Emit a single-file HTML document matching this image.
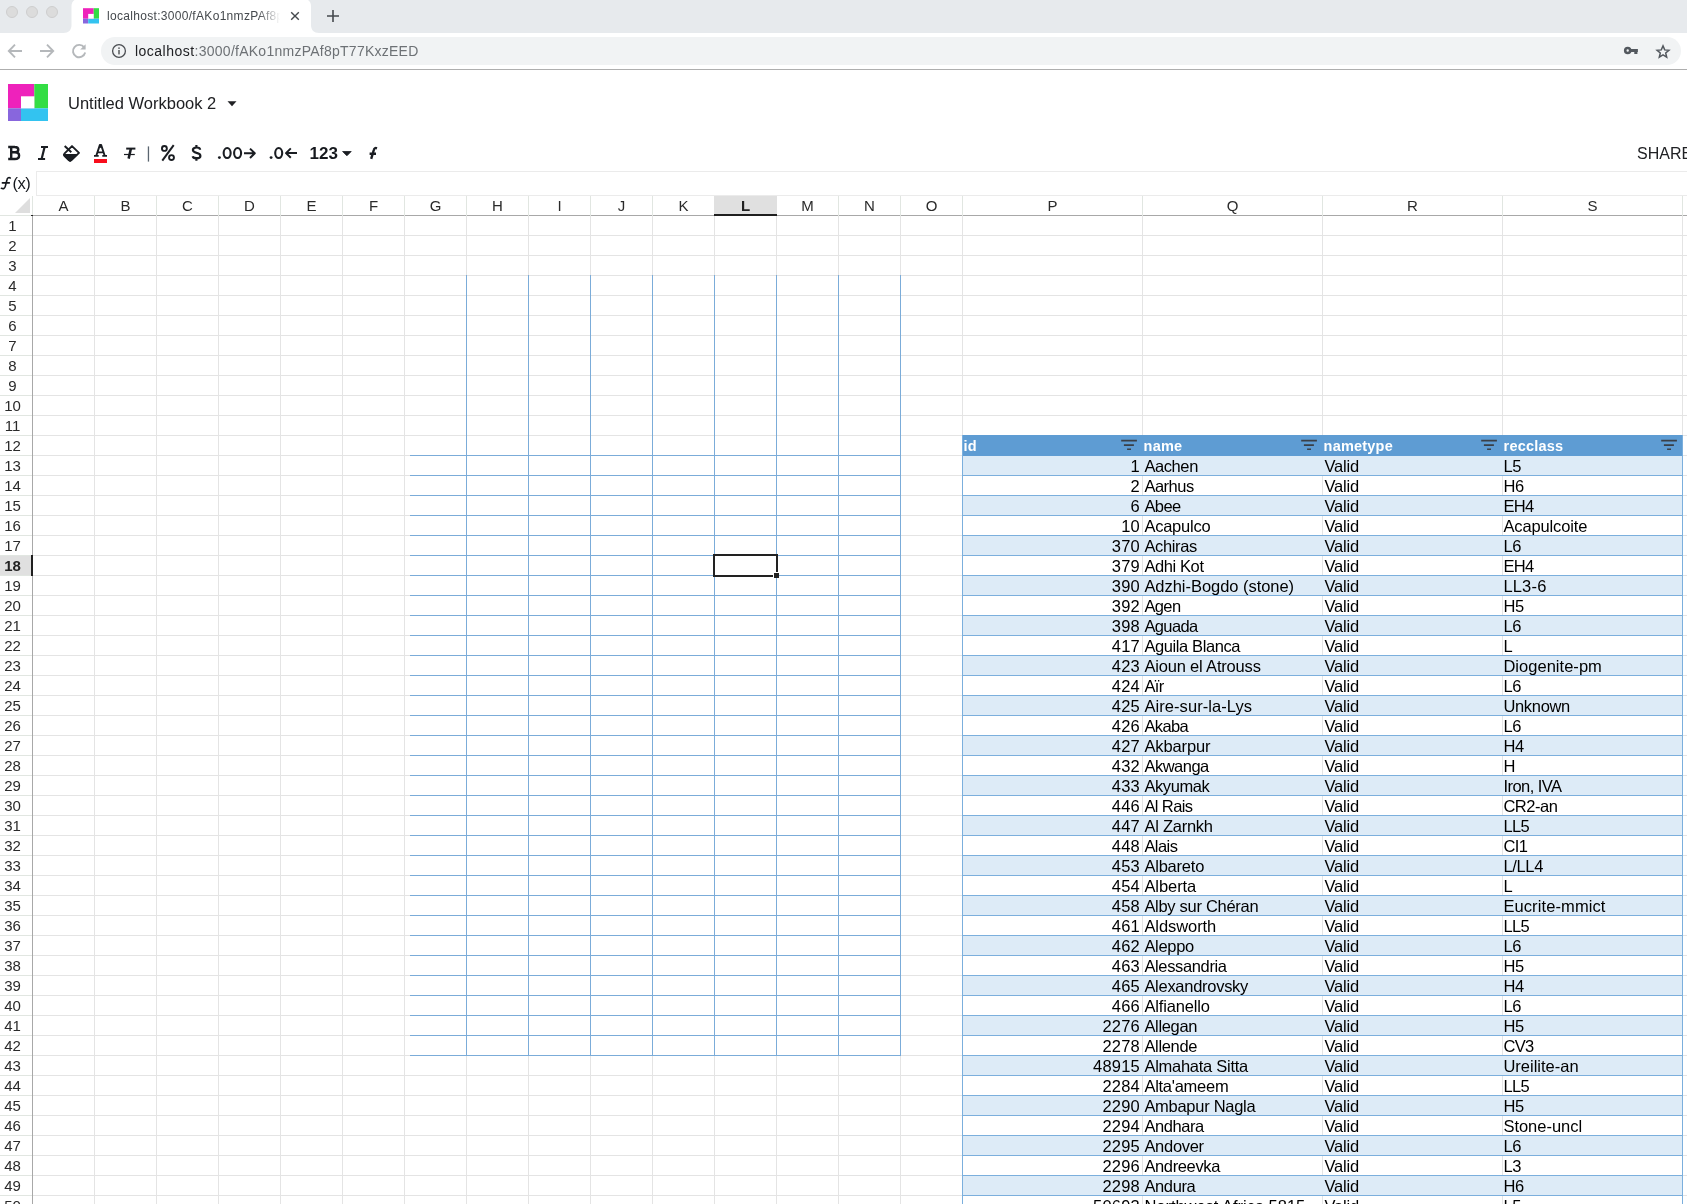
<!DOCTYPE html>
<html><head><meta charset="utf-8"><title>Untitled Workbook 2</title>
<style>
*{margin:0;padding:0;box-sizing:border-box}
html,body{width:1687px;height:1204px;overflow:hidden;background:#fff}
body{position:relative;font-family:"Liberation Sans",sans-serif;color:#000}
.abs{position:absolute}
#tabbar{left:0;top:0;width:1687px;height:33px;background:#e7eaed}
.tl{position:absolute;top:6px;width:12px;height:12px;border-radius:50%;background:#dcdcdc;border:1px solid #cecece}
#urlbar{left:101px;top:37px;width:1580px;height:28px;border-radius:14px;background:#f1f3f4}
#sep{left:0;top:69px;width:1687px;height:1px;background:#aeaeae}
.ch{position:absolute;top:196px;height:19px;line-height:20px;font-size:15px;color:#2a2a2a;text-align:center}
.rh{position:absolute;left:0;width:25px;height:20px;line-height:21px;font-size:15px;color:#2a2a2a;text-align:center}
.c{position:absolute;height:20px;line-height:21px;font-size:16.5px;white-space:nowrap;color:#000}
.r{text-align:right}
.band{position:absolute;left:963px;width:719px;height:19px;background:#ddebf7}
.bl{position:absolute;left:962px;width:721px;height:1px;background:#7bafdd}

.tbt{top:144px;font-weight:bold;font-size:17px;line-height:20px;color:#15181d;white-space:nowrap}
.hd{position:absolute;top:436px;margin-left:-0.4px;letter-spacing:0.2px;height:20px;line-height:21px;font-size:14.5px;font-weight:bold;color:#fff;white-space:nowrap}
#wrap{position:absolute;left:0;top:0;width:1687px;height:1204px;overflow:hidden;will-change:transform}
</style></head><body><div id="wrap">

<div class="abs" id="tabbar">
<div class="tl" style="left:6px"></div>
<div class="tl" style="left:26px"></div>
<div class="tl" style="left:46px"></div>
<svg class="abs" style="left:60px;top:0" width="264" height="33" viewBox="0 0 264 33"><path d="M3.5 33 C8.5 33 11.5 30 11.5 25 L11.5 6 C11.5 2.5 13.5 0 17 -1.5 L245.5 -1.5 C249 0 251 2.5 251 6 L251 25 C251 30 254 33 259 33 Z" fill="#fff"/></svg>
<svg class="abs" style="left:83px;top:8px" width="16" height="16" viewBox="0 0 16 16"><rect x="0" y="0.2" width="10.7" height="10.5" fill="#ee22bb"/><rect x="10.7" y="0.2" width="5.3" height="10.5" fill="#33dd44"/><rect x="0" y="10.7" width="5.2" height="4.8" fill="#8866dd"/><rect x="5.2" y="10.7" width="10.8" height="4.8" fill="#33c3f0"/><rect x="5.2" y="5.9" width="5.5" height="4.8" fill="#fff"/></svg>
<div class="abs" style="left:107px;top:8px;width:176px;height:17px;line-height:17px;font-size:12px;color:#45494d;white-space:nowrap;overflow:hidden;letter-spacing:0.31px">localhost:3000/fAKo1nmzPAf8pT</div>
<div class="abs" style="left:258px;top:6px;width:26px;height:20px;background:linear-gradient(90deg,rgba(255,255,255,0),#fff 85%)"></div>
<svg class="abs" style="left:290px;top:11px" width="10" height="10" viewBox="0 0 10 10"><path d="M1.2 1.2 L8.8 8.8 M8.8 1.2 L1.2 8.8" stroke="#45494d" stroke-width="1.4" fill="none"/></svg>
<svg class="abs" style="left:326px;top:9px" width="14" height="14" viewBox="0 0 14 14"><path d="M7 1 V13 M1 7 H13" stroke="#45494d" stroke-width="1.6" fill="none"/></svg>
</div>
<svg class="abs" style="left:7px;top:43px" width="16" height="16" viewBox="0 0 16 16"><path d="M15 8 H2.5 M8 1.7 L1.8 8 L8 14.3" stroke="#b5b8bb" stroke-width="1.9" fill="none"/></svg>
<svg class="abs" style="left:39px;top:43px" width="16" height="16" viewBox="0 0 16 16"><path d="M1 8 H13.5 M8 1.7 L14.2 8 L8 14.3" stroke="#b5b8bb" stroke-width="1.9" fill="none"/></svg>
<svg class="abs" style="left:71px;top:43px" width="16" height="16" viewBox="0 0 16 16"><path d="M13.2 4.4 A6.2 6.2 0 1 0 14.2 9.6" stroke="#b5b8bb" stroke-width="1.9" fill="none"/><path d="M14.6 1.2 V6.6 H9.2 Z" fill="#b5b8bb"/></svg>
<div class="abs" id="urlbar"></div>
<svg class="abs" style="left:111px;top:43px" width="16" height="16" viewBox="0 0 16 16"><circle cx="8" cy="8" r="6.4" stroke="#4a4d51" stroke-width="1.3" fill="none"/><rect x="7.3" y="7" width="1.4" height="4.4" fill="#4a4d51"/><rect x="7.3" y="4.4" width="1.4" height="1.5" fill="#4a4d51"/></svg>
<div class="abs" style="left:135px;top:42px;height:18px;line-height:18px;font-size:14px;color:#6d7175;white-space:nowrap;letter-spacing:0.255px"><span style="color:#202124;letter-spacing:0.48px">localhost</span>:3000/fAKo1nmzPAf8pT77KxzEED</div>
<svg class="abs" style="left:1620px;top:42px" width="20" height="18" viewBox="1620 42 20 18"><circle cx="1627.7" cy="50.5" r="2.5" stroke="#53585e" stroke-width="2.6" fill="none"/><path d="M1630.6 49 H1637.9 V52 H1637.4 V54.1 H1634.3 V52 H1630.6 Z" fill="#53585e"/></svg>
<svg class="abs" style="left:1654px;top:42px" width="18" height="18" viewBox="1654 42 18 18"><path d="M1663.00 45.85 L1664.71 49.90 L1668.94 50.26 L1665.70 53.05 L1666.69 57.10 L1663.00 54.94 L1659.31 57.10 L1660.30 53.05 L1657.06 50.26 L1661.29 49.90 Z" stroke="#53585e" stroke-width="1.5" fill="none" stroke-linejoin="miter"/></svg>
<div class="abs" id="sep"></div>
<svg class="abs" style="left:8px;top:84px" width="40" height="37" viewBox="0 0 40 37"><rect x="0" y="0" width="26.3" height="24.3" fill="#ee22bb"/><rect x="26.3" y="0" width="13.7" height="24.3" fill="#33dd44"/><rect x="0" y="24.3" width="13" height="12.7" fill="#8866dd"/><rect x="13" y="24.3" width="27" height="12.7" fill="#33c3f0"/><rect x="13" y="12.3" width="13.3" height="12" fill="#fff"/></svg>
<div class="abs" id="title" style="left:68px;top:93px;height:20px;line-height:20px;font-size:16.5px;color:#202124;white-space:nowrap;letter-spacing:0px">Untitled Workbook 2</div>
<svg class="abs" style="left:227px;top:101px" width="10" height="6" viewBox="0 0 10 6"><path d="M0.5 0.3 H9.5 L5 5.3 Z" fill="#202124"/></svg>
<svg class="abs" style="left:0;top:138px" width="400" height="30" viewBox="0 138 400 30" fill="none" stroke="#1a1d22" stroke-width="2" stroke-linejoin="round">
<path d="M8.2 147 H15 M11.2 147 V159 M8.2 159 H15 M14.8 147 C17.4 147 18.3 148.3 18.3 149.7 C18.3 151.2 17.2 152.2 15 152.2 H11.2 M15 152.2 C17.8 152.2 19.1 153.6 19.1 155.5 C19.1 157.5 17.7 159 14.8 159" stroke-width="2.4"/>
<path d="M41 147 H48 M38 159 H45.1 M44.6 147 L41.6 159" stroke-width="2.2"/>
<path d="M64.7 146 L71.3 152.2" stroke-width="2"/>
<path d="M72 146.1 L79 152.9 L71.2 160.4 Q70.1 161.4 69 160.4 L64.4 155.8 Q63.4 154.7 64.4 153.7 Z" stroke-width="1.9"/>
<path d="M64 154.6 H77.2 L71.2 160.4 Q70.1 161.4 69 160.4 L64.4 155.8 Q63.8 155.2 64 154.6 Z" fill="#1a1d22" stroke-width="1.2"/>
<path d="M94 155.9 H98.7 M102.3 155.9 H107 M96.2 156 L99.9 144.9 H101.1 L104.8 156 M97.6 152.4 H103.4" stroke-width="1.9"/><path d="M99.9 144.9 H101.1 L100.5 147.6 Z" fill="#15181d" stroke-width="1"/>
<rect x="94" y="159" width="13" height="4" fill="#f80d1c" stroke="none"/>
<path d="M126.2 148.6 H135.4" stroke-width="2"/><path d="M130.9 148.6 L128.6 158.6" stroke-width="2.5"/><path d="M124 154.5 H134.8" stroke-width="1.2"/>
<rect x="147.8" y="146.4" width="1.3" height="15.2" fill="#5a6570" stroke="none"/>
<circle cx="164.4" cy="148.4" r="2.45" stroke-width="1.9"/><circle cx="171.5" cy="157.6" r="2.45" stroke-width="1.9"/><path d="M173.7 145.2 L162.3 160.7" stroke-width="2"/>
<path d="M200.1 149.8 C200.1 148.3 198.8 147.5 196.5 147.5 C194.2 147.5 192.9 148.6 192.9 150.1 C192.9 151.7 194.2 152.3 196.6 152.9 C199.3 153.5 200.4 154.4 200.4 155.9 C200.4 157.5 199 158.2 196.5 158.2 C194.2 158.2 192.9 157.4 192.7 156.2 M196.4 145.1 V147.5 M196.4 158.2 V160.8" stroke-linejoin="round" stroke-width="2.2"/>
<path d="M244 153.3 H254.6 M250 148.6 L254.8 153.3 L250 158"/>
<path d="M297 153.1 H286.2 M290.8 148.4 L286 153.1 L290.8 157.8"/>
<path d="M342.6 151.5 H351.2 L346.9 155.8 Z" fill="#1a1d22" stroke-width="0.8"/>
<path d="M377 148.3 C375.3 147.7 374.2 148.2 373.8 150 L371.2 158.9 M369.6 153.8 H376" stroke-width="2.4"/>
<circle cx="219.4" cy="157.6" r="1.45" fill="#1a1d22" stroke="none"/><ellipse cx="227.15" cy="153.05" rx="3.5" ry="5.0" stroke-width="2.1"/><ellipse cx="237.6" cy="153.05" rx="3.5" ry="5.0" stroke-width="2.1"/>
<circle cx="271.1" cy="157.6" r="1.45" fill="#1a1d22" stroke="none"/><ellipse cx="278.7" cy="153.05" rx="3.5" ry="5.0" stroke-width="2.1"/>
</svg>
<div class="abs tbt" style="left:309.6px">123</div>
<div class="abs" style="left:1637px;top:144px;font-size:16px;line-height:20px;color:#202124;white-space:nowrap">SHARE</div>
<div class="abs" style="left:36px;top:171px;width:1660px;height:25px;border:1px solid #ebebeb"></div>
<svg class="abs" style="left:0;top:172px" width="14" height="22" viewBox="0 172 14 22" fill="none" stroke="#15181d" stroke-width="1.6" stroke-linecap="round"><path d="M10.3 177.9 C8.5 177.2 7.3 178 6.9 180 L5.3 186.4 C4.8 188.5 3.3 189 1.4 188.3 M2.4 182.9 H9.3"/></svg>
<div class="abs" id="fx" style="left:12.4px;top:173px;font-size:16.5px;line-height:20px;color:#15181d;white-space:nowrap;letter-spacing:-0.4px">(x)</div>
<svg class="abs" style="left:0;top:0" width="1687" height="1204" viewBox="0 0 1687 1204" shape-rendering="crispEdges">
<rect x="0" y="235" width="1687" height="1" fill="#e4e4e4"/>
<rect x="0" y="255" width="1687" height="1" fill="#e4e4e4"/>
<rect x="0" y="275" width="1687" height="1" fill="#e4e4e4"/>
<rect x="0" y="295" width="1687" height="1" fill="#e4e4e4"/>
<rect x="0" y="315" width="1687" height="1" fill="#e4e4e4"/>
<rect x="0" y="335" width="1687" height="1" fill="#e4e4e4"/>
<rect x="0" y="355" width="1687" height="1" fill="#e4e4e4"/>
<rect x="0" y="375" width="1687" height="1" fill="#e4e4e4"/>
<rect x="0" y="395" width="1687" height="1" fill="#e4e4e4"/>
<rect x="0" y="415" width="1687" height="1" fill="#e4e4e4"/>
<rect x="0" y="435" width="1687" height="1" fill="#e4e4e4"/>
<rect x="0" y="455" width="1687" height="1" fill="#e4e4e4"/>
<rect x="0" y="475" width="1687" height="1" fill="#e4e4e4"/>
<rect x="0" y="495" width="1687" height="1" fill="#e4e4e4"/>
<rect x="0" y="515" width="1687" height="1" fill="#e4e4e4"/>
<rect x="0" y="535" width="1687" height="1" fill="#e4e4e4"/>
<rect x="0" y="555" width="1687" height="1" fill="#e4e4e4"/>
<rect x="0" y="575" width="1687" height="1" fill="#e4e4e4"/>
<rect x="0" y="595" width="1687" height="1" fill="#e4e4e4"/>
<rect x="0" y="615" width="1687" height="1" fill="#e4e4e4"/>
<rect x="0" y="635" width="1687" height="1" fill="#e4e4e4"/>
<rect x="0" y="655" width="1687" height="1" fill="#e4e4e4"/>
<rect x="0" y="675" width="1687" height="1" fill="#e4e4e4"/>
<rect x="0" y="695" width="1687" height="1" fill="#e4e4e4"/>
<rect x="0" y="715" width="1687" height="1" fill="#e4e4e4"/>
<rect x="0" y="735" width="1687" height="1" fill="#e4e4e4"/>
<rect x="0" y="755" width="1687" height="1" fill="#e4e4e4"/>
<rect x="0" y="775" width="1687" height="1" fill="#e4e4e4"/>
<rect x="0" y="795" width="1687" height="1" fill="#e4e4e4"/>
<rect x="0" y="815" width="1687" height="1" fill="#e4e4e4"/>
<rect x="0" y="835" width="1687" height="1" fill="#e4e4e4"/>
<rect x="0" y="855" width="1687" height="1" fill="#e4e4e4"/>
<rect x="0" y="875" width="1687" height="1" fill="#e4e4e4"/>
<rect x="0" y="895" width="1687" height="1" fill="#e4e4e4"/>
<rect x="0" y="915" width="1687" height="1" fill="#e4e4e4"/>
<rect x="0" y="935" width="1687" height="1" fill="#e4e4e4"/>
<rect x="0" y="955" width="1687" height="1" fill="#e4e4e4"/>
<rect x="0" y="975" width="1687" height="1" fill="#e4e4e4"/>
<rect x="0" y="995" width="1687" height="1" fill="#e4e4e4"/>
<rect x="0" y="1015" width="1687" height="1" fill="#e4e4e4"/>
<rect x="0" y="1035" width="1687" height="1" fill="#e4e4e4"/>
<rect x="0" y="1055" width="1687" height="1" fill="#e4e4e4"/>
<rect x="0" y="1075" width="1687" height="1" fill="#e4e4e4"/>
<rect x="0" y="1095" width="1687" height="1" fill="#e4e4e4"/>
<rect x="0" y="1115" width="1687" height="1" fill="#e4e4e4"/>
<rect x="0" y="1135" width="1687" height="1" fill="#e4e4e4"/>
<rect x="0" y="1155" width="1687" height="1" fill="#e4e4e4"/>
<rect x="0" y="1175" width="1687" height="1" fill="#e4e4e4"/>
<rect x="0" y="1195" width="1687" height="1" fill="#e4e4e4"/>
<rect x="94" y="196" width="1" height="1008" fill="#e4e4e4"/>
<rect x="156" y="196" width="1" height="1008" fill="#e4e4e4"/>
<rect x="218" y="196" width="1" height="1008" fill="#e4e4e4"/>
<rect x="280" y="196" width="1" height="1008" fill="#e4e4e4"/>
<rect x="342" y="196" width="1" height="1008" fill="#e4e4e4"/>
<rect x="404" y="196" width="1" height="1008" fill="#e4e4e4"/>
<rect x="466" y="196" width="1" height="1008" fill="#e4e4e4"/>
<rect x="528" y="196" width="1" height="1008" fill="#e4e4e4"/>
<rect x="590" y="196" width="1" height="1008" fill="#e4e4e4"/>
<rect x="652" y="196" width="1" height="1008" fill="#e4e4e4"/>
<rect x="714" y="196" width="1" height="1008" fill="#e4e4e4"/>
<rect x="776" y="196" width="1" height="1008" fill="#e4e4e4"/>
<rect x="838" y="196" width="1" height="1008" fill="#e4e4e4"/>
<rect x="900" y="196" width="1" height="1008" fill="#e4e4e4"/>
<rect x="962" y="196" width="1" height="1008" fill="#e4e4e4"/>
<rect x="1142" y="196" width="1" height="1008" fill="#e4e4e4"/>
<rect x="1322" y="196" width="1" height="1008" fill="#e4e4e4"/>
<rect x="1502" y="196" width="1" height="1008" fill="#e4e4e4"/>
<rect x="1682" y="196" width="1" height="1008" fill="#e4e4e4"/>
<rect x="0" y="215" width="32" height="1" fill="#e1e6e1"/>
<rect x="0" y="235" width="32" height="1" fill="#e1e6e1"/>
<rect x="0" y="255" width="32" height="1" fill="#e1e6e1"/>
<rect x="0" y="275" width="32" height="1" fill="#e1e6e1"/>
<rect x="0" y="295" width="32" height="1" fill="#e1e6e1"/>
<rect x="0" y="315" width="32" height="1" fill="#e1e6e1"/>
<rect x="0" y="335" width="32" height="1" fill="#e1e6e1"/>
<rect x="0" y="355" width="32" height="1" fill="#e1e6e1"/>
<rect x="0" y="375" width="32" height="1" fill="#e1e6e1"/>
<rect x="0" y="395" width="32" height="1" fill="#e1e6e1"/>
<rect x="0" y="415" width="32" height="1" fill="#e1e6e1"/>
<rect x="0" y="435" width="32" height="1" fill="#e1e6e1"/>
<rect x="0" y="455" width="32" height="1" fill="#e1e6e1"/>
<rect x="0" y="475" width="32" height="1" fill="#e1e6e1"/>
<rect x="0" y="495" width="32" height="1" fill="#e1e6e1"/>
<rect x="0" y="515" width="32" height="1" fill="#e1e6e1"/>
<rect x="0" y="535" width="32" height="1" fill="#e1e6e1"/>
<rect x="0" y="555" width="32" height="1" fill="#e1e6e1"/>
<rect x="0" y="575" width="32" height="1" fill="#e1e6e1"/>
<rect x="0" y="595" width="32" height="1" fill="#e1e6e1"/>
<rect x="0" y="615" width="32" height="1" fill="#e1e6e1"/>
<rect x="0" y="635" width="32" height="1" fill="#e1e6e1"/>
<rect x="0" y="655" width="32" height="1" fill="#e1e6e1"/>
<rect x="0" y="675" width="32" height="1" fill="#e1e6e1"/>
<rect x="0" y="695" width="32" height="1" fill="#e1e6e1"/>
<rect x="0" y="715" width="32" height="1" fill="#e1e6e1"/>
<rect x="0" y="735" width="32" height="1" fill="#e1e6e1"/>
<rect x="0" y="755" width="32" height="1" fill="#e1e6e1"/>
<rect x="0" y="775" width="32" height="1" fill="#e1e6e1"/>
<rect x="0" y="795" width="32" height="1" fill="#e1e6e1"/>
<rect x="0" y="815" width="32" height="1" fill="#e1e6e1"/>
<rect x="0" y="835" width="32" height="1" fill="#e1e6e1"/>
<rect x="0" y="855" width="32" height="1" fill="#e1e6e1"/>
<rect x="0" y="875" width="32" height="1" fill="#e1e6e1"/>
<rect x="0" y="895" width="32" height="1" fill="#e1e6e1"/>
<rect x="0" y="915" width="32" height="1" fill="#e1e6e1"/>
<rect x="0" y="935" width="32" height="1" fill="#e1e6e1"/>
<rect x="0" y="955" width="32" height="1" fill="#e1e6e1"/>
<rect x="0" y="975" width="32" height="1" fill="#e1e6e1"/>
<rect x="0" y="995" width="32" height="1" fill="#e1e6e1"/>
<rect x="0" y="1015" width="32" height="1" fill="#e1e6e1"/>
<rect x="0" y="1035" width="32" height="1" fill="#e1e6e1"/>
<rect x="0" y="1055" width="32" height="1" fill="#e1e6e1"/>
<rect x="0" y="1075" width="32" height="1" fill="#e1e6e1"/>
<rect x="0" y="1095" width="32" height="1" fill="#e1e6e1"/>
<rect x="0" y="1115" width="32" height="1" fill="#e1e6e1"/>
<rect x="0" y="1135" width="32" height="1" fill="#e1e6e1"/>
<rect x="0" y="1155" width="32" height="1" fill="#e1e6e1"/>
<rect x="0" y="1175" width="32" height="1" fill="#e1e6e1"/>
<rect x="0" y="1195" width="32" height="1" fill="#e1e6e1"/>
<rect x="33" y="215" width="1654" height="1" fill="#a8a8a8"/>
<rect x="32" y="216" width="1" height="988" fill="#a8a8a8"/>
<rect x="32" y="196" width="1" height="20" fill="#e1e6e1"/>
<rect x="94" y="196" width="1" height="20" fill="#e1e6e1"/>
<rect x="156" y="196" width="1" height="20" fill="#e1e6e1"/>
<rect x="218" y="196" width="1" height="20" fill="#e1e6e1"/>
<rect x="280" y="196" width="1" height="20" fill="#e1e6e1"/>
<rect x="342" y="196" width="1" height="20" fill="#e1e6e1"/>
<rect x="404" y="196" width="1" height="20" fill="#e1e6e1"/>
<rect x="466" y="196" width="1" height="20" fill="#e1e6e1"/>
<rect x="528" y="196" width="1" height="20" fill="#e1e6e1"/>
<rect x="590" y="196" width="1" height="20" fill="#e1e6e1"/>
<rect x="652" y="196" width="1" height="20" fill="#e1e6e1"/>
<rect x="714" y="196" width="1" height="20" fill="#e1e6e1"/>
<rect x="776" y="196" width="1" height="20" fill="#e1e6e1"/>
<rect x="838" y="196" width="1" height="20" fill="#e1e6e1"/>
<rect x="900" y="196" width="1" height="20" fill="#e1e6e1"/>
<rect x="962" y="196" width="1" height="20" fill="#e1e6e1"/>
<rect x="1142" y="196" width="1" height="20" fill="#e1e6e1"/>
<rect x="1322" y="196" width="1" height="20" fill="#e1e6e1"/>
<rect x="1502" y="196" width="1" height="20" fill="#e1e6e1"/>
<rect x="1682" y="196" width="1" height="20" fill="#e1e6e1"/>
<rect x="31" y="215" width="2" height="1" fill="#222"/>
</svg>
<svg class="abs" style="left:15px;top:198px" width="15" height="15" viewBox="0 0 15 15"><path d="M15 0 V15 H0 Z" fill="#dedede"/></svg>
<div class="abs" style="left:714px;top:196px;width:63px;height:18px;background:#e0e0e0"></div>
<div class="abs" style="left:714px;top:214px;width:63px;height:2px;background:#1f1f1f"></div>
<div class="abs" style="left:0;top:556px;width:31px;height:19px;background:#e0e0e0"></div>
<div class="abs" style="left:31px;top:555px;width:2px;height:21px;background:#1f1f1f"></div>
<div class="ch" style="left:32px;width:63px;">A</div>
<div class="ch" style="left:94px;width:63px;">B</div>
<div class="ch" style="left:156px;width:63px;">C</div>
<div class="ch" style="left:218px;width:63px;">D</div>
<div class="ch" style="left:280px;width:63px;">E</div>
<div class="ch" style="left:342px;width:63px;">F</div>
<div class="ch" style="left:404px;width:63px;">G</div>
<div class="ch" style="left:466px;width:63px;">H</div>
<div class="ch" style="left:528px;width:63px;">I</div>
<div class="ch" style="left:590px;width:63px;">J</div>
<div class="ch" style="left:652px;width:63px;">K</div>
<div class="ch" style="left:714px;width:63px;font-weight:bold;color:#222;">L</div>
<div class="ch" style="left:776px;width:63px;">M</div>
<div class="ch" style="left:838px;width:63px;">N</div>
<div class="ch" style="left:900px;width:63px;">O</div>
<div class="ch" style="left:962px;width:181px;">P</div>
<div class="ch" style="left:1142px;width:181px;">Q</div>
<div class="ch" style="left:1322px;width:181px;">R</div>
<div class="ch" style="left:1502px;width:181px;">S</div>
<div class="rh" style="top:215px;">1</div>
<div class="rh" style="top:235px;">2</div>
<div class="rh" style="top:255px;">3</div>
<div class="rh" style="top:275px;">4</div>
<div class="rh" style="top:295px;">5</div>
<div class="rh" style="top:315px;">6</div>
<div class="rh" style="top:335px;">7</div>
<div class="rh" style="top:355px;">8</div>
<div class="rh" style="top:375px;">9</div>
<div class="rh" style="top:395px;">10</div>
<div class="rh" style="top:415px;">11</div>
<div class="rh" style="top:435px;">12</div>
<div class="rh" style="top:455px;">13</div>
<div class="rh" style="top:475px;">14</div>
<div class="rh" style="top:495px;">15</div>
<div class="rh" style="top:515px;">16</div>
<div class="rh" style="top:535px;">17</div>
<div class="rh" style="top:555px;font-weight:bold;color:#222;">18</div>
<div class="rh" style="top:575px;">19</div>
<div class="rh" style="top:595px;">20</div>
<div class="rh" style="top:615px;">21</div>
<div class="rh" style="top:635px;">22</div>
<div class="rh" style="top:655px;">23</div>
<div class="rh" style="top:675px;">24</div>
<div class="rh" style="top:695px;">25</div>
<div class="rh" style="top:715px;">26</div>
<div class="rh" style="top:735px;">27</div>
<div class="rh" style="top:755px;">28</div>
<div class="rh" style="top:775px;">29</div>
<div class="rh" style="top:795px;">30</div>
<div class="rh" style="top:815px;">31</div>
<div class="rh" style="top:835px;">32</div>
<div class="rh" style="top:855px;">33</div>
<div class="rh" style="top:875px;">34</div>
<div class="rh" style="top:895px;">35</div>
<div class="rh" style="top:915px;">36</div>
<div class="rh" style="top:935px;">37</div>
<div class="rh" style="top:955px;">38</div>
<div class="rh" style="top:975px;">39</div>
<div class="rh" style="top:995px;">40</div>
<div class="rh" style="top:1015px;">41</div>
<div class="rh" style="top:1035px;">42</div>
<div class="rh" style="top:1055px;">43</div>
<div class="rh" style="top:1075px;">44</div>
<div class="rh" style="top:1095px;">45</div>
<div class="rh" style="top:1115px;">46</div>
<div class="rh" style="top:1135px;">47</div>
<div class="rh" style="top:1155px;">48</div>
<div class="rh" style="top:1175px;">49</div>
<div class="rh" style="top:1195px;">50</div>
<div class="band" style="top:456px"></div>
<div class="band" style="top:496px"></div>
<div class="band" style="top:536px"></div>
<div class="band" style="top:576px"></div>
<div class="band" style="top:616px"></div>
<div class="band" style="top:656px"></div>
<div class="band" style="top:696px"></div>
<div class="band" style="top:736px"></div>
<div class="band" style="top:776px"></div>
<div class="band" style="top:816px"></div>
<div class="band" style="top:856px"></div>
<div class="band" style="top:896px"></div>
<div class="band" style="top:936px"></div>
<div class="band" style="top:976px"></div>
<div class="band" style="top:1016px"></div>
<div class="band" style="top:1056px"></div>
<div class="band" style="top:1096px"></div>
<div class="band" style="top:1136px"></div>
<div class="band" style="top:1176px"></div>
<div class="bl" style="top:455px"></div>
<div class="bl" style="top:475px"></div>
<div class="bl" style="top:495px"></div>
<div class="bl" style="top:515px"></div>
<div class="bl" style="top:535px"></div>
<div class="bl" style="top:555px"></div>
<div class="bl" style="top:575px"></div>
<div class="bl" style="top:595px"></div>
<div class="bl" style="top:615px"></div>
<div class="bl" style="top:635px"></div>
<div class="bl" style="top:655px"></div>
<div class="bl" style="top:675px"></div>
<div class="bl" style="top:695px"></div>
<div class="bl" style="top:715px"></div>
<div class="bl" style="top:735px"></div>
<div class="bl" style="top:755px"></div>
<div class="bl" style="top:775px"></div>
<div class="bl" style="top:795px"></div>
<div class="bl" style="top:815px"></div>
<div class="bl" style="top:835px"></div>
<div class="bl" style="top:855px"></div>
<div class="bl" style="top:875px"></div>
<div class="bl" style="top:895px"></div>
<div class="bl" style="top:915px"></div>
<div class="bl" style="top:935px"></div>
<div class="bl" style="top:955px"></div>
<div class="bl" style="top:975px"></div>
<div class="bl" style="top:995px"></div>
<div class="bl" style="top:1015px"></div>
<div class="bl" style="top:1035px"></div>
<div class="bl" style="top:1055px"></div>
<div class="bl" style="top:1075px"></div>
<div class="bl" style="top:1095px"></div>
<div class="bl" style="top:1115px"></div>
<div class="bl" style="top:1135px"></div>
<div class="bl" style="top:1155px"></div>
<div class="bl" style="top:1175px"></div>
<div class="bl" style="top:1195px"></div>
<div class="abs" style="left:962px;top:435px;width:721px;height:21px;background:#5e9cd3"></div>
<div class="abs" style="left:962px;top:435px;width:1px;height:769px;background:#7bafdd"></div>
<div class="abs" style="left:1682px;top:435px;width:1px;height:769px;background:#7bafdd"></div>
<div class="hd" style="left:964px">id</div>
<svg class="abs" style="left:1121px;top:438px" width="16" height="14" viewBox="0 0 16 14"><path d="M0.2 1.7 H15.9 V3.5 H0.2 Z M2.9 6.2 H12.9 V7.9 H2.9 Z M6.1 10.6 H10 V12.1 H6.1 Z" fill="#3a3f47"/></svg>
<div class="hd" style="left:1144px">name</div>
<svg class="abs" style="left:1301px;top:438px" width="16" height="14" viewBox="0 0 16 14"><path d="M0.2 1.7 H15.9 V3.5 H0.2 Z M2.9 6.2 H12.9 V7.9 H2.9 Z M6.1 10.6 H10 V12.1 H6.1 Z" fill="#3a3f47"/></svg>
<div class="hd" style="left:1324px">nametype</div>
<svg class="abs" style="left:1481px;top:438px" width="16" height="14" viewBox="0 0 16 14"><path d="M0.2 1.7 H15.9 V3.5 H0.2 Z M2.9 6.2 H12.9 V7.9 H2.9 Z M6.1 10.6 H10 V12.1 H6.1 Z" fill="#3a3f47"/></svg>
<div class="hd" style="left:1504px">recclass</div>
<svg class="abs" style="left:1661px;top:438px" width="16" height="14" viewBox="0 0 16 14"><path d="M0.2 1.7 H15.9 V3.5 H0.2 Z M2.9 6.2 H12.9 V7.9 H2.9 Z M6.1 10.6 H10 V12.1 H6.1 Z" fill="#3a3f47"/></svg>
<div class="c r" style="top:456px;left:1000px;width:139.9px;letter-spacing:0.2px">1</div>
<div class="c" style="top:456px;left:1144.4px;letter-spacing:-0.41px">Aachen</div>
<div class="c" style="top:456px;left:1324.4px;letter-spacing:-0.15px">Valid</div>
<div class="c" style="top:456px;left:1503.4px;letter-spacing:-0.30px">L5</div>
<div class="c r" style="top:476px;left:1000px;width:139.9px;letter-spacing:0.2px">2</div>
<div class="c" style="top:476px;left:1144.4px;letter-spacing:-0.50px">Aarhus</div>
<div class="c" style="top:476px;left:1324.4px;letter-spacing:-0.15px">Valid</div>
<div class="c" style="top:476px;left:1503.4px;letter-spacing:-0.30px">H6</div>
<div class="c r" style="top:496px;left:1000px;width:139.9px;letter-spacing:0.2px">6</div>
<div class="c" style="top:496px;left:1144.4px;letter-spacing:-0.55px">Abee</div>
<div class="c" style="top:496px;left:1324.4px;letter-spacing:-0.15px">Valid</div>
<div class="c" style="top:496px;left:1503.4px;letter-spacing:-0.60px">EH4</div>
<div class="c r" style="top:516px;left:1000px;width:139.9px;letter-spacing:0.2px">10</div>
<div class="c" style="top:516px;left:1144.4px;letter-spacing:-0.24px">Acapulco</div>
<div class="c" style="top:516px;left:1324.4px;letter-spacing:-0.15px">Valid</div>
<div class="c" style="top:516px;left:1503.4px;letter-spacing:-0.13px">Acapulcoite</div>
<div class="c r" style="top:536px;left:1000px;width:139.9px;letter-spacing:0.2px">370</div>
<div class="c" style="top:536px;left:1144.4px;letter-spacing:-0.35px">Achiras</div>
<div class="c" style="top:536px;left:1324.4px;letter-spacing:-0.15px">Valid</div>
<div class="c" style="top:536px;left:1503.4px;letter-spacing:-0.30px">L6</div>
<div class="c r" style="top:556px;left:1000px;width:139.9px;letter-spacing:0.2px">379</div>
<div class="c" style="top:556px;left:1144.4px;letter-spacing:-0.40px">Adhi Kot</div>
<div class="c" style="top:556px;left:1324.4px;letter-spacing:-0.15px">Valid</div>
<div class="c" style="top:556px;left:1503.4px;letter-spacing:-0.60px">EH4</div>
<div class="c r" style="top:576px;left:1000px;width:139.9px;letter-spacing:0.2px">390</div>
<div class="c" style="top:576px;left:1144.4px;letter-spacing:-0.04px">Adzhi-Bogdo (stone)</div>
<div class="c" style="top:576px;left:1324.4px;letter-spacing:-0.15px">Valid</div>
<div class="c" style="top:576px;left:1503.4px;letter-spacing:0.18px">LL3-6</div>
<div class="c r" style="top:596px;left:1000px;width:139.9px;letter-spacing:0.2px">392</div>
<div class="c" style="top:596px;left:1144.4px;letter-spacing:-0.60px">Agen</div>
<div class="c" style="top:596px;left:1324.4px;letter-spacing:-0.15px">Valid</div>
<div class="c" style="top:596px;left:1503.4px;letter-spacing:-0.30px">H5</div>
<div class="c r" style="top:616px;left:1000px;width:139.9px;letter-spacing:0.2px">398</div>
<div class="c" style="top:616px;left:1144.4px;letter-spacing:-0.60px">Aguada</div>
<div class="c" style="top:616px;left:1324.4px;letter-spacing:-0.15px">Valid</div>
<div class="c" style="top:616px;left:1503.4px;letter-spacing:-0.30px">L6</div>
<div class="c r" style="top:636px;left:1000px;width:139.9px;letter-spacing:0.2px">417</div>
<div class="c" style="top:636px;left:1144.4px;letter-spacing:-0.40px">Aguila Blanca</div>
<div class="c" style="top:636px;left:1324.4px;letter-spacing:-0.15px">Valid</div>
<div class="c" style="top:636px;left:1503.4px;letter-spacing:0.00px">L</div>
<div class="c r" style="top:656px;left:1000px;width:139.9px;letter-spacing:0.2px">423</div>
<div class="c" style="top:656px;left:1144.4px;letter-spacing:-0.18px">Aioun el Atrouss</div>
<div class="c" style="top:656px;left:1324.4px;letter-spacing:-0.15px">Valid</div>
<div class="c" style="top:656px;left:1503.4px;letter-spacing:0.03px">Diogenite-pm</div>
<div class="c r" style="top:676px;left:1000px;width:139.9px;letter-spacing:0.2px">424</div>
<div class="c" style="top:676px;left:1144.4px;letter-spacing:-0.60px">Aïr</div>
<div class="c" style="top:676px;left:1324.4px;letter-spacing:-0.15px">Valid</div>
<div class="c" style="top:676px;left:1503.4px;letter-spacing:-0.30px">L6</div>
<div class="c r" style="top:696px;left:1000px;width:139.9px;letter-spacing:0.2px">425</div>
<div class="c" style="top:696px;left:1144.4px;letter-spacing:0.07px">Aire-sur-la-Lys</div>
<div class="c" style="top:696px;left:1324.4px;letter-spacing:-0.15px">Valid</div>
<div class="c" style="top:696px;left:1503.4px;letter-spacing:-0.32px">Unknown</div>
<div class="c r" style="top:716px;left:1000px;width:139.9px;letter-spacing:0.2px">426</div>
<div class="c" style="top:716px;left:1144.4px;letter-spacing:-0.60px">Akaba</div>
<div class="c" style="top:716px;left:1324.4px;letter-spacing:-0.15px">Valid</div>
<div class="c" style="top:716px;left:1503.4px;letter-spacing:-0.30px">L6</div>
<div class="c r" style="top:736px;left:1000px;width:139.9px;letter-spacing:0.2px">427</div>
<div class="c" style="top:736px;left:1144.4px;letter-spacing:-0.12px">Akbarpur</div>
<div class="c" style="top:736px;left:1324.4px;letter-spacing:-0.15px">Valid</div>
<div class="c" style="top:736px;left:1503.4px;letter-spacing:-0.30px">H4</div>
<div class="c r" style="top:756px;left:1000px;width:139.9px;letter-spacing:0.2px">432</div>
<div class="c" style="top:756px;left:1144.4px;letter-spacing:-0.50px">Akwanga</div>
<div class="c" style="top:756px;left:1324.4px;letter-spacing:-0.15px">Valid</div>
<div class="c" style="top:756px;left:1503.4px;letter-spacing:0.00px">H</div>
<div class="c r" style="top:776px;left:1000px;width:139.9px;letter-spacing:0.2px">433</div>
<div class="c" style="top:776px;left:1144.4px;letter-spacing:-0.42px">Akyumak</div>
<div class="c" style="top:776px;left:1324.4px;letter-spacing:-0.15px">Valid</div>
<div class="c" style="top:776px;left:1503.4px;letter-spacing:-0.53px">Iron, IVA</div>
<div class="c r" style="top:796px;left:1000px;width:139.9px;letter-spacing:0.2px">446</div>
<div class="c" style="top:796px;left:1144.4px;letter-spacing:-0.60px">Al Rais</div>
<div class="c" style="top:796px;left:1324.4px;letter-spacing:-0.15px">Valid</div>
<div class="c" style="top:796px;left:1503.4px;letter-spacing:-0.45px">CR2-an</div>
<div class="c r" style="top:816px;left:1000px;width:139.9px;letter-spacing:0.2px">447</div>
<div class="c" style="top:816px;left:1144.4px;letter-spacing:-0.25px">Al Zarnkh</div>
<div class="c" style="top:816px;left:1324.4px;letter-spacing:-0.15px">Valid</div>
<div class="c" style="top:816px;left:1503.4px;letter-spacing:-0.60px">LL5</div>
<div class="c r" style="top:836px;left:1000px;width:139.9px;letter-spacing:0.2px">448</div>
<div class="c" style="top:836px;left:1144.4px;letter-spacing:-0.56px">Alais</div>
<div class="c" style="top:836px;left:1324.4px;letter-spacing:-0.15px">Valid</div>
<div class="c" style="top:836px;left:1503.4px;letter-spacing:-0.60px">CI1</div>
<div class="c r" style="top:856px;left:1000px;width:139.9px;letter-spacing:0.2px">453</div>
<div class="c" style="top:856px;left:1144.4px;letter-spacing:-0.21px">Albareto</div>
<div class="c" style="top:856px;left:1324.4px;letter-spacing:-0.15px">Valid</div>
<div class="c" style="top:856px;left:1503.4px;letter-spacing:-0.32px">L/LL4</div>
<div class="c r" style="top:876px;left:1000px;width:139.9px;letter-spacing:0.2px">454</div>
<div class="c" style="top:876px;left:1144.4px;letter-spacing:-0.07px">Alberta</div>
<div class="c" style="top:876px;left:1324.4px;letter-spacing:-0.15px">Valid</div>
<div class="c" style="top:876px;left:1503.4px;letter-spacing:0.00px">L</div>
<div class="c r" style="top:896px;left:1000px;width:139.9px;letter-spacing:0.2px">458</div>
<div class="c" style="top:896px;left:1144.4px;letter-spacing:-0.29px">Alby sur Chéran</div>
<div class="c" style="top:896px;left:1324.4px;letter-spacing:-0.15px">Valid</div>
<div class="c" style="top:896px;left:1503.4px;letter-spacing:0.10px">Eucrite-mmict</div>
<div class="c r" style="top:916px;left:1000px;width:139.9px;letter-spacing:0.2px">461</div>
<div class="c" style="top:916px;left:1144.4px;letter-spacing:-0.07px">Aldsworth</div>
<div class="c" style="top:916px;left:1324.4px;letter-spacing:-0.15px">Valid</div>
<div class="c" style="top:916px;left:1503.4px;letter-spacing:-0.60px">LL5</div>
<div class="c r" style="top:936px;left:1000px;width:139.9px;letter-spacing:0.2px">462</div>
<div class="c" style="top:936px;left:1144.4px;letter-spacing:-0.30px">Aleppo</div>
<div class="c" style="top:936px;left:1324.4px;letter-spacing:-0.15px">Valid</div>
<div class="c" style="top:936px;left:1503.4px;letter-spacing:-0.30px">L6</div>
<div class="c r" style="top:956px;left:1000px;width:139.9px;letter-spacing:0.2px">463</div>
<div class="c" style="top:956px;left:1144.4px;letter-spacing:-0.36px">Alessandria</div>
<div class="c" style="top:956px;left:1324.4px;letter-spacing:-0.15px">Valid</div>
<div class="c" style="top:956px;left:1503.4px;letter-spacing:-0.30px">H5</div>
<div class="c r" style="top:976px;left:1000px;width:139.9px;letter-spacing:0.2px">465</div>
<div class="c" style="top:976px;left:1144.4px;letter-spacing:-0.28px">Alexandrovsky</div>
<div class="c" style="top:976px;left:1324.4px;letter-spacing:-0.15px">Valid</div>
<div class="c" style="top:976px;left:1503.4px;letter-spacing:-0.30px">H4</div>
<div class="c r" style="top:996px;left:1000px;width:139.9px;letter-spacing:0.2px">466</div>
<div class="c" style="top:996px;left:1144.4px;letter-spacing:-0.16px">Alfianello</div>
<div class="c" style="top:996px;left:1324.4px;letter-spacing:-0.15px">Valid</div>
<div class="c" style="top:996px;left:1503.4px;letter-spacing:-0.30px">L6</div>
<div class="c r" style="top:1016px;left:1000px;width:139.9px;letter-spacing:0.2px">2276</div>
<div class="c" style="top:1016px;left:1144.4px;letter-spacing:-0.34px">Allegan</div>
<div class="c" style="top:1016px;left:1324.4px;letter-spacing:-0.15px">Valid</div>
<div class="c" style="top:1016px;left:1503.4px;letter-spacing:-0.30px">H5</div>
<div class="c r" style="top:1036px;left:1000px;width:139.9px;letter-spacing:0.2px">2278</div>
<div class="c" style="top:1036px;left:1144.4px;letter-spacing:-0.34px">Allende</div>
<div class="c" style="top:1036px;left:1324.4px;letter-spacing:-0.15px">Valid</div>
<div class="c" style="top:1036px;left:1503.4px;letter-spacing:-0.60px">CV3</div>
<div class="c r" style="top:1056px;left:1000px;width:139.9px;letter-spacing:0.2px">48915</div>
<div class="c" style="top:1056px;left:1144.4px;letter-spacing:-0.27px">Almahata Sitta</div>
<div class="c" style="top:1056px;left:1324.4px;letter-spacing:-0.15px">Valid</div>
<div class="c" style="top:1056px;left:1503.4px;letter-spacing:0.00px">Ureilite-an</div>
<div class="c r" style="top:1076px;left:1000px;width:139.9px;letter-spacing:0.2px">2284</div>
<div class="c" style="top:1076px;left:1144.4px;letter-spacing:-0.26px">Alta'ameem</div>
<div class="c" style="top:1076px;left:1324.4px;letter-spacing:-0.15px">Valid</div>
<div class="c" style="top:1076px;left:1503.4px;letter-spacing:-0.60px">LL5</div>
<div class="c r" style="top:1096px;left:1000px;width:139.9px;letter-spacing:0.2px">2290</div>
<div class="c" style="top:1096px;left:1144.4px;letter-spacing:-0.28px">Ambapur Nagla</div>
<div class="c" style="top:1096px;left:1324.4px;letter-spacing:-0.15px">Valid</div>
<div class="c" style="top:1096px;left:1503.4px;letter-spacing:-0.30px">H5</div>
<div class="c r" style="top:1116px;left:1000px;width:139.9px;letter-spacing:0.2px">2294</div>
<div class="c" style="top:1116px;left:1144.4px;letter-spacing:-0.42px">Andhara</div>
<div class="c" style="top:1116px;left:1324.4px;letter-spacing:-0.15px">Valid</div>
<div class="c" style="top:1116px;left:1503.4px;letter-spacing:-0.02px">Stone-uncl</div>
<div class="c r" style="top:1136px;left:1000px;width:139.9px;letter-spacing:0.2px">2295</div>
<div class="c" style="top:1136px;left:1144.4px;letter-spacing:-0.29px">Andover</div>
<div class="c" style="top:1136px;left:1324.4px;letter-spacing:-0.15px">Valid</div>
<div class="c" style="top:1136px;left:1503.4px;letter-spacing:-0.30px">L6</div>
<div class="c r" style="top:1156px;left:1000px;width:139.9px;letter-spacing:0.2px">2296</div>
<div class="c" style="top:1156px;left:1144.4px;letter-spacing:-0.36px">Andreevka</div>
<div class="c" style="top:1156px;left:1324.4px;letter-spacing:-0.15px">Valid</div>
<div class="c" style="top:1156px;left:1503.4px;letter-spacing:-0.30px">L3</div>
<div class="c r" style="top:1176px;left:1000px;width:139.9px;letter-spacing:0.2px">2298</div>
<div class="c" style="top:1176px;left:1144.4px;letter-spacing:-0.37px">Andura</div>
<div class="c" style="top:1176px;left:1324.4px;letter-spacing:-0.15px">Valid</div>
<div class="c" style="top:1176px;left:1503.4px;letter-spacing:-0.30px">H6</div>
<div class="c r" style="top:1196px;left:1000px;width:139.9px;letter-spacing:0.2px">50693</div>
<div class="c" style="top:1196px;left:1144.4px;letter-spacing:-0.03px">Northwest Africa 5815</div>
<div class="c" style="top:1196px;left:1324.4px;letter-spacing:-0.15px">Valid</div>
<div class="c" style="top:1196px;left:1503.4px;letter-spacing:-0.30px">L5</div>
<svg class="abs" style="left:0;top:0" width="1687" height="1204" viewBox="0 0 1687 1204" shape-rendering="crispEdges">
<rect x="466" y="275" width="1" height="781" fill="#7bacd9"/>
<rect x="528" y="275" width="1" height="781" fill="#7bacd9"/>
<rect x="590" y="275" width="1" height="781" fill="#7bacd9"/>
<rect x="652" y="275" width="1" height="781" fill="#7bacd9"/>
<rect x="714" y="275" width="1" height="781" fill="#7bacd9"/>
<rect x="776" y="275" width="1" height="781" fill="#7bacd9"/>
<rect x="838" y="275" width="1" height="781" fill="#7bacd9"/>
<rect x="900" y="275" width="1" height="781" fill="#7bacd9"/>
<rect x="410" y="455" width="491" height="1" fill="#7bacd9"/>
<rect x="410" y="475" width="491" height="1" fill="#7bacd9"/>
<rect x="410" y="495" width="491" height="1" fill="#7bacd9"/>
<rect x="410" y="515" width="491" height="1" fill="#7bacd9"/>
<rect x="410" y="535" width="491" height="1" fill="#7bacd9"/>
<rect x="410" y="555" width="491" height="1" fill="#7bacd9"/>
<rect x="410" y="575" width="491" height="1" fill="#7bacd9"/>
<rect x="410" y="595" width="491" height="1" fill="#7bacd9"/>
<rect x="410" y="615" width="491" height="1" fill="#7bacd9"/>
<rect x="410" y="635" width="491" height="1" fill="#7bacd9"/>
<rect x="410" y="655" width="491" height="1" fill="#7bacd9"/>
<rect x="410" y="675" width="491" height="1" fill="#7bacd9"/>
<rect x="410" y="695" width="491" height="1" fill="#7bacd9"/>
<rect x="410" y="715" width="491" height="1" fill="#7bacd9"/>
<rect x="410" y="735" width="491" height="1" fill="#7bacd9"/>
<rect x="410" y="755" width="491" height="1" fill="#7bacd9"/>
<rect x="410" y="775" width="491" height="1" fill="#7bacd9"/>
<rect x="410" y="795" width="491" height="1" fill="#7bacd9"/>
<rect x="410" y="815" width="491" height="1" fill="#7bacd9"/>
<rect x="410" y="835" width="491" height="1" fill="#7bacd9"/>
<rect x="410" y="855" width="491" height="1" fill="#7bacd9"/>
<rect x="410" y="875" width="491" height="1" fill="#7bacd9"/>
<rect x="410" y="895" width="491" height="1" fill="#7bacd9"/>
<rect x="410" y="915" width="491" height="1" fill="#7bacd9"/>
<rect x="410" y="935" width="491" height="1" fill="#7bacd9"/>
<rect x="410" y="955" width="491" height="1" fill="#7bacd9"/>
<rect x="410" y="975" width="491" height="1" fill="#7bacd9"/>
<rect x="410" y="995" width="491" height="1" fill="#7bacd9"/>
<rect x="410" y="1015" width="491" height="1" fill="#7bacd9"/>
<rect x="410" y="1035" width="491" height="1" fill="#7bacd9"/>
<rect x="410" y="1055" width="491" height="1" fill="#7bacd9"/>
</svg>
<div class="abs" style="left:713px;top:554px;width:65px;height:23px;border:2px solid #222"></div>
<div class="abs" style="left:773px;top:572px;width:6px;height:6px;background:#fff"></div>
<div class="abs" style="left:774px;top:573px;width:5px;height:5px;background:#222"></div>
</div></body></html>
